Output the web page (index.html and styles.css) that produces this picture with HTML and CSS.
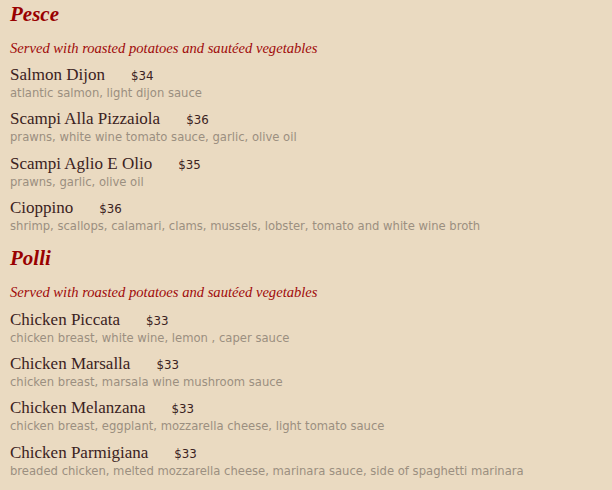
FILE: index.html
```html
<!DOCTYPE html>
<html>
<head>
<meta charset="utf-8">
<link rel="stylesheet" href="styles.css">
</head>
<body>
<div class="menu">
  <section class="section">
    <h2 class="section-title">Pesce</h2>
    <p class="section-note">Served with roasted potatoes and sautéed vegetables</p>
    <div class="item">
      <div class="item-head"><span class="item-name">Salmon Dijon</span><span class="item-price">$34</span></div>
      <div class="item-desc">atlantic salmon, light dijon sauce</div>
    </div>
    <div class="item">
      <div class="item-head"><span class="item-name">Scampi Alla Pizzaiola</span><span class="item-price">$36</span></div>
      <div class="item-desc">prawns, white wine tomato sauce, garlic, olive oil</div>
    </div>
    <div class="item">
      <div class="item-head"><span class="item-name">Scampi Aglio E Olio</span><span class="item-price">$35</span></div>
      <div class="item-desc">prawns, garlic, olive oil</div>
    </div>
    <div class="item">
      <div class="item-head"><span class="item-name">Cioppino</span><span class="item-price">$36</span></div>
      <div class="item-desc">shrimp, scallops, calamari, clams, mussels, lobster, tomato and white wine broth</div>
    </div>
  </section>
  <section class="section">
    <h2 class="section-title">Polli</h2>
    <p class="section-note">Served with roasted potatoes and sautéed vegetables</p>
    <div class="item">
      <div class="item-head"><span class="item-name">Chicken Piccata</span><span class="item-price">$33</span></div>
      <div class="item-desc">chicken breast, white wine, lemon , caper sauce</div>
    </div>
    <div class="item">
      <div class="item-head"><span class="item-name">Chicken Marsalla</span><span class="item-price">$33</span></div>
      <div class="item-desc">chicken breast, marsala wine mushroom sauce</div>
    </div>
    <div class="item">
      <div class="item-head"><span class="item-name">Chicken Melanzana</span><span class="item-price">$33</span></div>
      <div class="item-desc">chicken breast, eggplant, mozzarella cheese, light tomato sauce</div>
    </div>
    <div class="item">
      <div class="item-head"><span class="item-name">Chicken Parmigiana</span><span class="item-price">$33</span></div>
      <div class="item-desc">breaded chicken, melted mozzarella cheese, marinara sauce, side of spaghetti marinara</div>
    </div>
  </section>
</div>
</body>
</html>
```

FILE: styles.css
```css
html, body {
  margin: 0;
  padding: 0;
  background: #eadac1;
}
.menu {
  padding: 2px 10px 0 10px;
}
.section-title {
  margin: 0;
  font-family: "Liberation Serif", serif;
  font-style: italic;
  font-weight: bold;
  font-size: 21px;
  line-height: 24px;
  color: #990000;
}
.section-note {
  margin: 13px 0 8px 0;
  font-family: "Liberation Serif", serif;
  font-style: italic;
  font-size: 14.6px;
  line-height: 18px;
  color: #a00a0a;
}
.item {
  margin-bottom: 8.3px;
}
.item-head {
  display: flex;
  align-items: baseline;
  gap: 26px;
  height: 20px;
}
.item-name {
  font-family: "Liberation Serif", serif;
  font-size: 17px;
  line-height: 20px;
  color: #3b2222;
}
.item-price {
  font-family: "DejaVu Sans", sans-serif;
  font-size: 11.8px;
  color: #3b2222;
}
.item-desc {
  font-family: "DejaVu Sans", sans-serif;
  font-size: 11.6px;
  line-height: 16px;
  color: #9b8f80;
}
.section + .section {
  margin-top: 12px;
}
.section + .section .section-note {
  margin-bottom: 9px;
}
```
